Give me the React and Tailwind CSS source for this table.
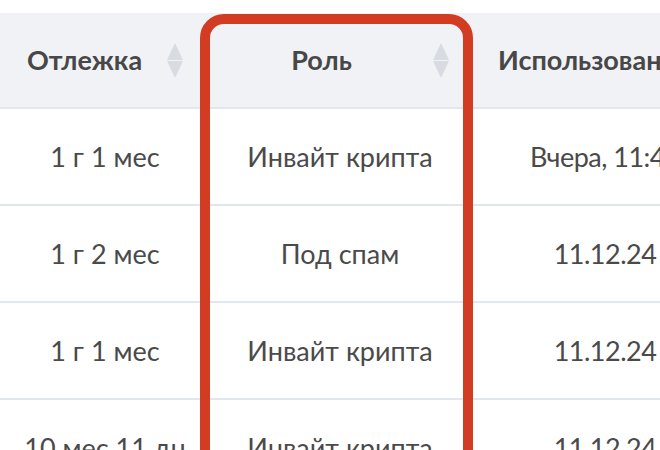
import React from 'react';

const rows = [
  { age: '1 г 1 мес', role: 'Инвайт крипта', used: 'Вчера, 11:45' },
  { age: '1 г 2 мес', role: 'Под спам', used: '11.12.24' },
  { age: '1 г 1 мес', role: 'Инвайт крипта', used: '11.12.24' },
  { age: '10 мес 11 дн', role: 'Инвайт крипта', used: '11.12.24' },
];

const SortIcon = () => (
  <svg width="16" height="35" viewBox="0 0 16 35" className="shrink-0">
    <polygon points="8,0 16,17 0,17" fill="#d8dbe1" />
    <polygon points="0,18 16,18 8,35" fill="#d8dbe1" />
  </svg>
);

export default function App() {
  return (
    <div
      className="relative w-[660px] h-[450px] overflow-hidden bg-white pt-[13px] text-[#4a4a4a]"
      style={{ fontFamily: 'Lato, "Noto Sans", sans-serif' }}
    >
      <div className="w-[737px]">
        <div className="grid grid-cols-[200px_273px_264px] h-[96px] bg-[#f0f2f6] border-b-2 border-[#e1e7ee] text-[27px] font-bold text-[#474747]">
          <div className="flex items-center pl-[27px] gap-[25px]">
            <span>Отлежка</span>
            <SortIcon />
          </div>
          <div className="flex items-center pl-[10px] pr-[24px]">
            <span className="flex-1 text-center">Роль</span>
            <SortIcon />
          </div>
          <div className="flex items-center pl-[25px] whitespace-nowrap">
            <span>Использовано</span>
          </div>
        </div>
        {rows.map((r, i) => (
          <div
            key={i}
            className="grid grid-cols-[200px_273px_264px] h-[97px] border-b-2 border-[#e1e7ee] text-[27px] whitespace-nowrap"
          >
            <div className="flex items-center justify-center pl-[10px] pt-[2px]">{r.age}</div>
            <div className="flex items-center justify-center pl-[7px] pt-[2px]">{r.role}</div>
            <div className="flex items-center justify-center pt-[2px] tracking-[-0.5px]">{r.used}</div>
          </div>
        ))}
      </div>
      <div className="absolute left-[200px] top-[14px] w-[273px] h-[520px] border-[10px] border-[#d23c22] rounded-t-[24px]" />
    </div>
  );
}
